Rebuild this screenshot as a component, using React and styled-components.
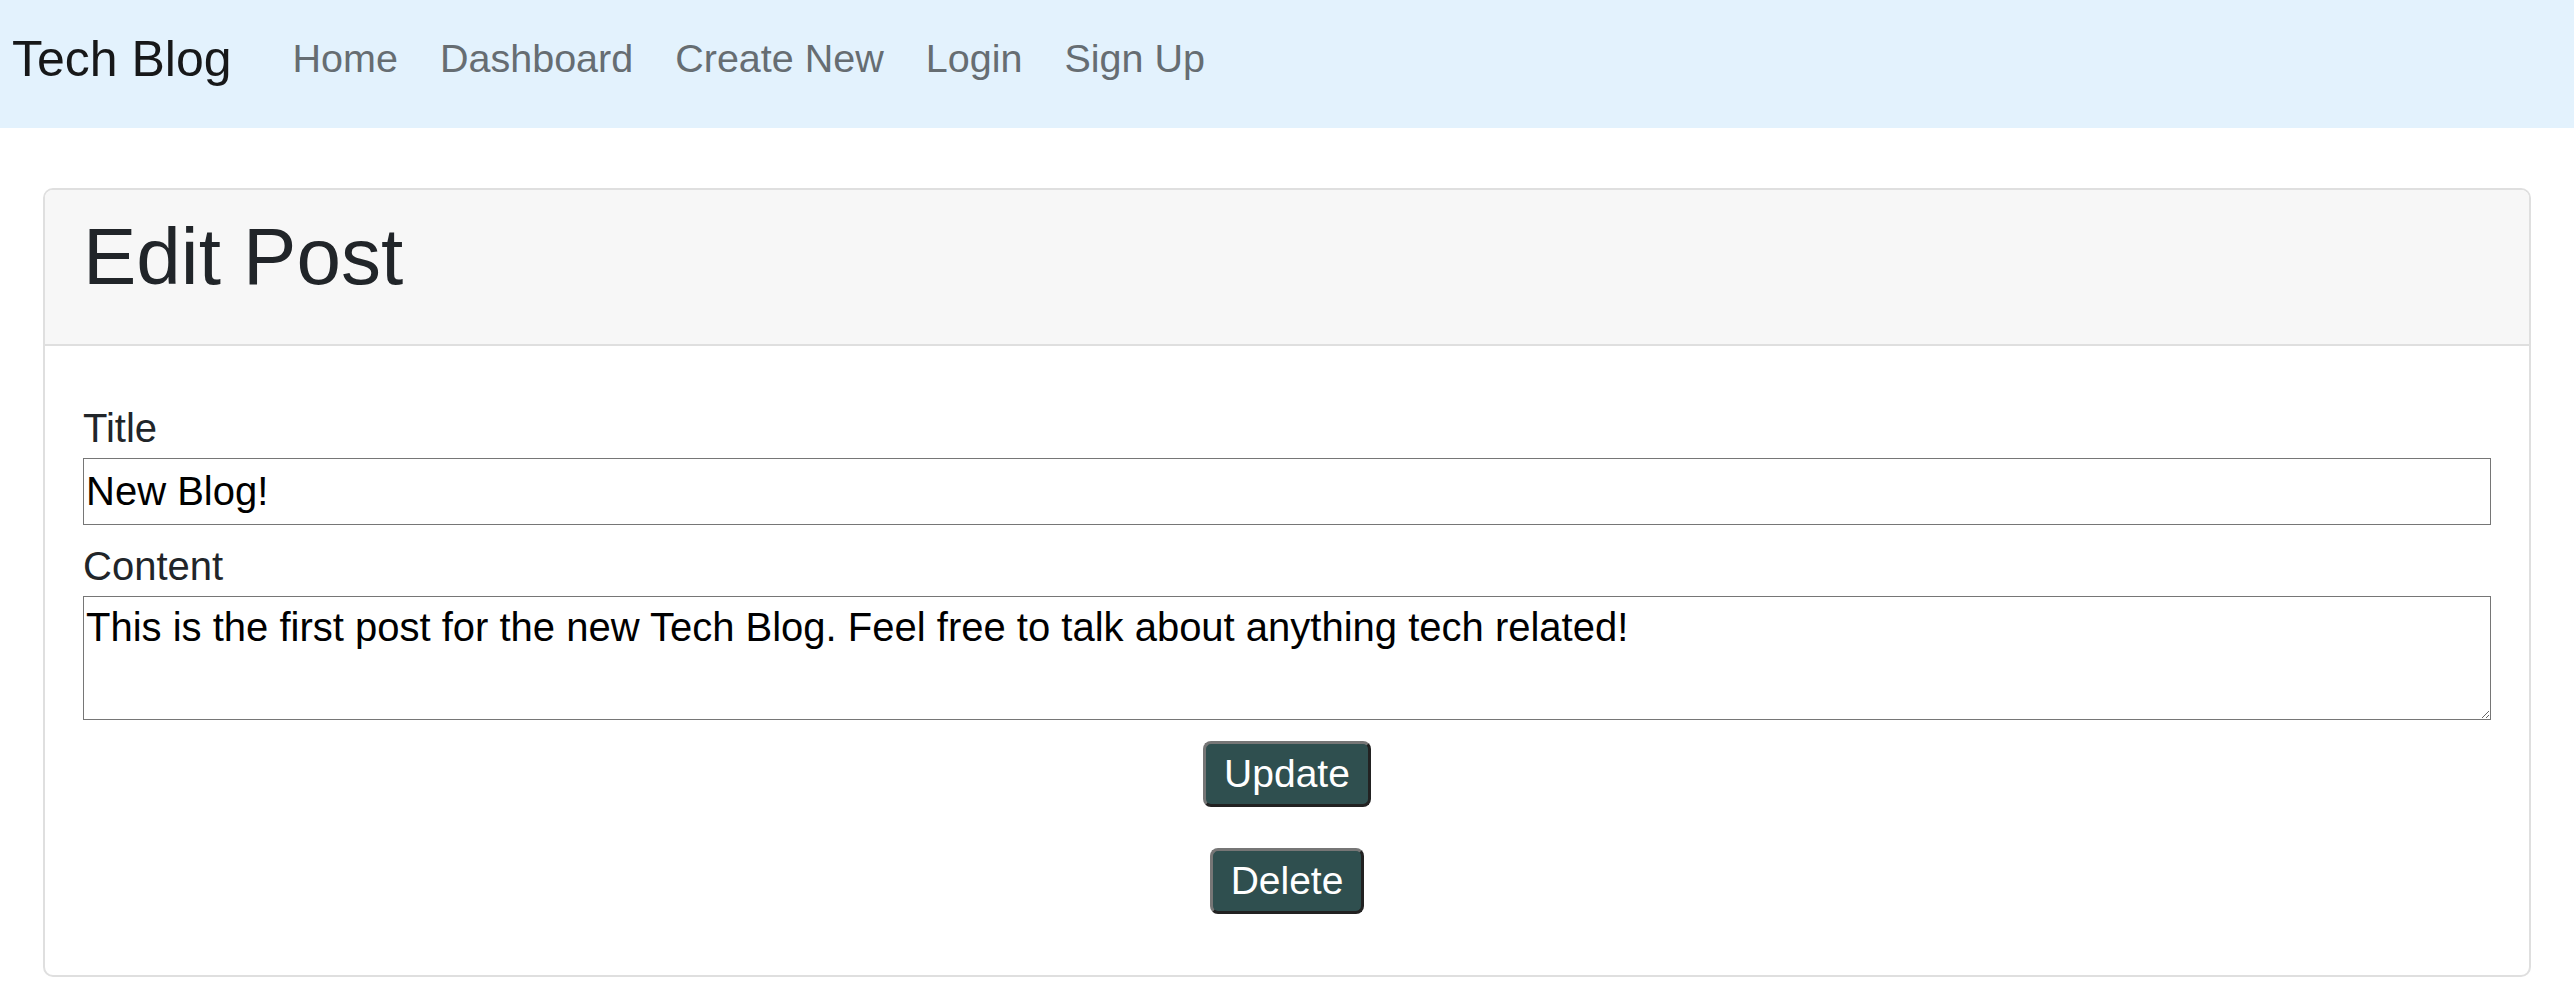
import React from "react";
import styled, { createGlobalStyle } from "styled-components";

const GlobalStyle = createGlobalStyle`
  * { box-sizing: border-box; }
  body {
    margin: 0;
    background: #fff;
    color: #212529;
    font-family: "Liberation Sans", Arial, sans-serif;
  }
`;

const NavBar = styled.nav`
  display: flex;
  align-items: center;
  height: 128px;
  padding: 0 0 10px 12px;
  background: #e3f2fd;
`;

const Brand = styled.a`
  font-size: 50px;
  line-height: 72px;
  color: #171819;
  text-decoration: none;
  margin-right: 40px;
`;

const NavLinks = styled.ul`
  display: flex;
  list-style: none;
  margin: 0 0 2px;
  padding: 0;
`;

const NavLink = styled.a`
  display: block;
  padding: 0 21px;
  font-size: 39.5px;
  line-height: 58px;
  color: #666d72;
  text-decoration: none;
`;

const Page = styled.main`
  padding: 60px 43px 0;
`;

const Card = styled.section`
  border: 2px solid #dfdfdf;
  border-radius: 10px;
  overflow: hidden;
`;

const CardHeader = styled.header`
  background: #f7f7f7;
  border-bottom: 2px solid #dfdfdf;
  padding: 19px 38px 20px;

  h1 {
    margin: 0 0 19px;
    font-size: 80px;
    line-height: 96px;
    font-weight: 400;
    color: #212529;
  }
`;

const CardBody = styled.form`
  display: flex;
  flex-direction: column;
  padding: 53px 38px 61px;
`;

const Field = styled.div`
  display: flex;
  flex-direction: column;
  & + & { margin-top: 12px; }
`;

const Label = styled.label`
  font-size: 40px;
  line-height: 59px;
  color: #212529;
`;

const TextInput = styled.input`
  height: 67px;
  padding: 0 2px;
  border: 1px solid #767676;
  border-radius: 0;
  font-family: "Liberation Sans", Arial, sans-serif;
  font-size: 40px;
  color: #000;
  background: #fff;
`;

const TextArea = styled.textarea`
  height: 124px;
  padding: 8px 2px;
  border: 1px solid #767676;
  border-radius: 0;
  font-family: "Liberation Sans", Arial, sans-serif;
  font-size: 40px;
  line-height: normal;
  color: #000;
  background: #fff;
`;

const Actions = styled.div`
  display: flex;
  flex-direction: column;
  align-items: center;
  gap: 41px;
  margin-top: 21px;
`;

const Button = styled.button`
  padding: 8px 18px;
  border: 3px solid;
  border-color: #767676 #222 #222 #767676;
  border-radius: 8px;
  background: #2f4f4f;
  color: #fff;
  font-family: "Liberation Sans", Arial, sans-serif;
  font-size: 39px;
  line-height: normal;
  cursor: pointer;
`;

const links = ["Home", "Dashboard", "Create New", "Login", "Sign Up"];

export default function App() {
  return (
    <>
      <GlobalStyle />
      <NavBar>
        <Brand href="#">Tech Blog</Brand>
        <NavLinks>
          {links.map((l) => (
            <li key={l}>
              <NavLink href="#">{l}</NavLink>
            </li>
          ))}
        </NavLinks>
      </NavBar>
      <Page>
        <Card>
          <CardHeader>
            <h1>Edit Post</h1>
          </CardHeader>
          <CardBody onSubmit={(e) => e.preventDefault()}>
            <Field>
              <Label htmlFor="title">Title</Label>
              <TextInput id="title" type="text" defaultValue="New Blog!" />
            </Field>
            <Field>
              <Label htmlFor="content">Content</Label>
              <TextArea
                id="content"
                defaultValue="This is the first post for the new Tech Blog. Feel free to talk about anything tech related!"
              />
            </Field>
            <Actions>
              <Button type="submit">Update</Button>
              <Button type="button">Delete</Button>
            </Actions>
          </CardBody>
        </Card>
      </Page>
    </>
  );
}
